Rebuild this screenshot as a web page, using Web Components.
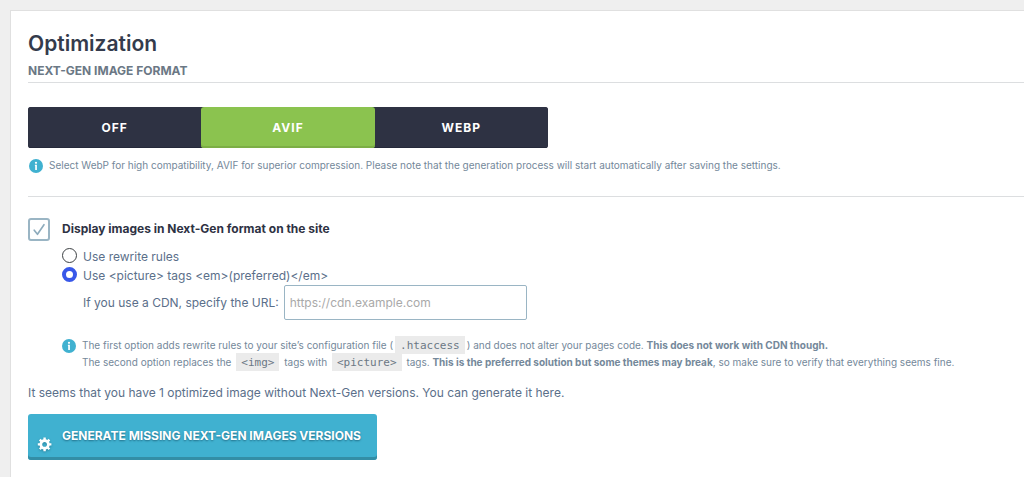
<!DOCTYPE html>
<html lang="en">
<head>
<meta charset="utf-8">
<title>Optimization</title>
<style>
  body { margin: 0; min-height: 100vh; display: flex; flex-direction: column; background: #efefef; font-family: Inter, "Liberation Sans", sans-serif; font-size: 12px; color: #5b6f8a; }
  settings-panel { flex: 1; margin: 10px 0 0 10px; }
</style>
</head>
<body>
<settings-panel>
  <section-heading slot="heading" subtitle="Next-Gen image format">Optimization</section-heading>
  <format-switch options="Off,AVIF,WebP" selected="AVIF"></format-switch>
  <info-note>Select WebP for high compatibility, AVIF for superior compression. Please note that the generation process will start automatically after saving the settings.</info-note>
  <display-options></display-options>
  <generate-action></generate-action>
</settings-panel>

<script>
const define = (name, html, setup) => {
  const template = document.createElement('template');
  template.innerHTML = '<style>*{box-sizing:border-box}</style>' + html;
  customElements.define(name, class extends HTMLElement {
    connectedCallback() {
      if (this.shadowRoot) return;
      const root = this.attachShadow({ mode: 'open' });
      root.append(template.content.cloneNode(true));
      if (setup) setup(this, root);
    }
  });
};

define('settings-panel', `
<style>
  :host { display: block; box-sizing: border-box; background: #fff; border: solid #e0e0e0; border-width: 1px 0 0 1px; padding: 20px 0 16px 17px; }
</style>
<main><slot name="heading"></slot><slot></slot></main>`);

define('section-heading', `
<style>
  :host { display: block; border-bottom: 1px solid #dcdee0; margin-bottom: 24px; }
  h1 { margin: 0; font-size: 21px; line-height: 25px; font-weight: 600; color: #343b4c; }
  h2 { margin: 0; padding: 7px 0 3px; font-size: 12px; line-height: 16px; font-weight: 700; color: #6b7885; text-transform: uppercase; }
</style>
<h1><slot></slot></h1><h2></h2>`, (host, root) => {
  root.querySelector('h2').textContent = host.getAttribute('subtitle');
});

define('format-switch', `
<style>
  :host { display: block; margin-bottom: 9px; }
  div { display: grid; grid-template-columns: repeat(3, 1fr); max-width: 520px; background: #2e3243; border-radius: 3px; overflow: hidden; }
  button { height: 41px; border: 0; padding: 0; background: #2e3243; color: #fff; font: 700 12px/16px Inter, "Liberation Sans", sans-serif; letter-spacing: 1px; text-transform: uppercase; box-shadow: inset 0 -1px #25293a; }
  button[aria-pressed=true] { background: #8bc34f; border-radius: 3px; box-shadow: inset 0 -2px #7cae45; }
</style>
<div role="group" aria-label="Next-Gen image format"></div>`, (host, root) => {
  const group = root.querySelector('div');
  for (const name of host.getAttribute('options').split(',')) {
    const button = document.createElement('button');
    button.type = 'button';
    button.textContent = name;
    button.setAttribute('aria-pressed', name === host.getAttribute('selected'));
    button.addEventListener('click', () => {
      for (const other of group.children) other.setAttribute('aria-pressed', other === button);
    });
    group.append(button);
  }
});

define('info-note', `
<style>
  :host { display: flex; gap: 6px; padding-left: 1px; font-size: 10px; line-height: 17px; color: #74889a; }
  svg { flex: none; width: 14px; height: 14px; margin-top: 2px; }
  ::slotted(code) { padding: 3px 5px 2px; margin: 0 2px; background: #ebebeb; font: 11px/16px "DejaVu Sans Mono", monospace; color: #6b7885; }
</style>
<svg viewBox="0 0 14 14" aria-hidden="true"><circle cx="7" cy="7" r="7" fill="#40b1d0"/><circle cx="7" cy="3.8" r="1.1" fill="#fff"/><path d="M5.9 5.8h2v5.2H6.2V7h-.3z" fill="#fff"/></svg>
<div><slot></slot></div>`);

define('display-options', `
<style>
  :host { display: block; margin-top: 22px; padding-top: 21px; border-top: 1px solid #dcdee0; }
  .check, .choice, .cdn { display: flex; align-items: center; }
  .check { gap: 12px; height: 23px; font-weight: 700; color: #2e3243; }
  .check label { padding-bottom: 2px; }
  input { margin: 0; }
  .check input { appearance: none; display: grid; place-items: center; width: 22px; height: 23px; border: 2px solid #9ab5c4; border-radius: 3px; background: #fff; }
  .box { display: grid; }
  .box > * { grid-area: 1 / 1; }
  .box svg { width: 22px; height: 23px; pointer-events: none; }
  .box input:not(:checked) + svg { visibility: hidden; }
  .options { padding: 5px 0 0 34px; }
  .choice { gap: 6px; height: 19px; }
  .choice input { appearance: none; width: 15px; height: 15px; border: 1px solid #3c4043; border-radius: 50%; }
  .choice input:checked { border: 4px solid #3858e9; }
  .choice label { padding-top: 2px; }
  .cdn { gap: 5px; padding: 1px 0 0 21px; }
  .cdn input { width: 243px; height: 35px; padding: 0 5px; border: 1px solid #9ab5c4; border-radius: 2px; font: 12px Inter, "Liberation Sans", sans-serif; color: #444; }
  .cdn input::placeholder { color: #a9a9a9; opacity: 1; }
  info-note { margin-top: 17px; padding-left: 0; }
</style>
<div class="check">
  <span class="box"><input type="checkbox" id="display" checked><svg viewBox="0 0 23 23" aria-hidden="true"><path d="M6.5 12.2l3.4 4.3 6.8-10" fill="none" stroke="#8dabbc" stroke-width="1.7" stroke-linecap="round" stroke-linejoin="round"/></svg></span>
  <label for="display">Display images in Next-Gen format on the site</label>
</div>
<div class="options">
  <div class="choice"><input type="radio" name="method" id="rewrite"><label for="rewrite">Use rewrite rules</label></div>
  <div class="choice"><input type="radio" name="method" id="picture" checked><label for="picture">Use &lt;picture&gt; tags &lt;em&gt;(preferred)&lt;/em&gt;</label></div>
  <div class="cdn"><label for="cdn">If you use a CDN, specify the URL:</label><input type="text" id="cdn" placeholder="https://cdn.example.com"></div>
  <info-note>The first option adds rewrite rules to your site’s configuration file (<code>.htaccess</code>) and does not alter your pages code. <strong>This does not work with CDN though.</strong><br>The second option replaces the <code>&lt;img&gt;</code> tags with <code>&lt;picture&gt;</code> tags. <strong>This is the preferred solution but some themes may break</strong>, so make sure to verify that everything seems fine.</info-note>
</div>`);

define('generate-action', `
<style>
  :host { display: block; margin-top: 13px; }
  p { margin: 0 0 12px; line-height: 18px; }
  button { display: inline-flex; align-items: center; gap: 9px; height: 46px; padding: 0 16px 2px 9px; border: 0; border-radius: 3px; background: #40b1d0; box-shadow: inset 0 -3px #338ea6; color: #fff; font: 700 12px/16px Inter, "Liberation Sans", sans-serif; text-transform: uppercase; text-shadow: 0 1px 2px #206c86; }
  svg { width: 16px; height: 16px; margin-top: 16px; filter: drop-shadow(0 1px 1px #2b86a0); }
</style>
<p>It seems that you have 1 optimized image without Next-Gen versions. You can generate it here.</p>
<button type="button">
<svg viewBox="0 0 20 20" aria-hidden="true"><path fill="#fff" d="M18 12h-2.18c-.17.7-.44 1.35-.81 1.93l1.54 1.54-2.1 2.1-1.54-1.54c-.58.36-1.23.63-1.91.79V19H8v-2.18c-.68-.16-1.33-.43-1.91-.79l-1.54 1.54-2.12-2.12 1.54-1.54c-.36-.58-.63-1.23-.79-1.91H1V9.03h2.17c.16-.7.44-1.35.8-1.94L2.43 5.55l2.1-2.1 1.54 1.54c.58-.37 1.24-.64 1.93-.81V2h3v2.18c.68.16 1.33.43 1.91.79l1.54-1.54 2.12 2.12-1.54 1.54c.36.59.64 1.24.8 1.94H18V12zm-8.5 1.5c1.66 0 3-1.34 3-3s-1.34-3-3-3-3 1.34-3 3 1.34 3 3 3z"/></svg>
<span>Generate missing Next-Gen images versions</span></button>`);
</script>
</body>
</html>
